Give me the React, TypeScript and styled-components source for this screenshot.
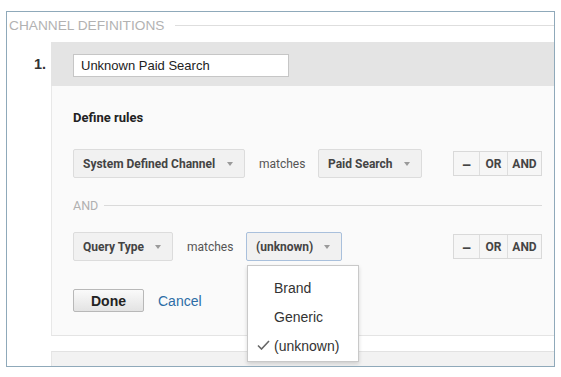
import styled, { createGlobalStyle } from "styled-components";

const GlobalStyle = createGlobalStyle`
  html, body {
    margin: 0;
    padding: 0;
    background: #ffffff;
  }
  body {
    font-family: "Liberation Sans", Arial, sans-serif;
  }
`;

const Frame = styled.div`
  margin: 11px 0 0 6px;
  width: 549px;
  height: 356px;
  box-sizing: border-box;
  border: 1px solid #8fa9ba;
  overflow: hidden;
  background: #ffffff;
`;

const Header = styled.div`
  display: flex;
  align-items: center;
  gap: 11px;
  height: 16px;
  margin: 5px 0 9px 2px;
`;

const HeaderTitle = styled.span`
  font-family: "Liberation Sans", Arial, sans-serif;
  font-size: 13.7px;
  color: #b2b2b2;
  white-space: nowrap;
`;

const HeaderLine = styled.div`
  flex: 1;
  height: 1px;
  background: #dedede;
`;

const Definition = styled.div<{ $gap?: number }>`
  display: grid;
  grid-template-columns: 44px 1fr;
  margin-top: ${(p) => p.$gap ?? 0}px;
`;

const Number = styled.div`
  height: 44px;
  display: flex;
  align-items: center;
  justify-content: flex-end;
  padding-right: 5px;
  font-family: "Liberation Sans", Arial, sans-serif;
  font-weight: 700;
  font-size: 14.5px;
  color: #333333;
`;

const NameBar = styled.div<{ $muted?: boolean }>`
  height: 44px;
  box-sizing: border-box;
  padding: 12px 22px 0;
  background: ${(p) => (p.$muted ? "#f2f2f2" : "#e4e4e4")};
  border-top: ${(p) => (p.$muted ? "1px solid #e2e2e2" : "none")};
  border-left: ${(p) => (p.$muted ? "1px solid #e6e6e6" : "none")};
`;

const NameInput = styled.div`
  width: 216px;
  height: 23px;
  box-sizing: border-box;
  border: 1px solid #c6c6c6;
  background: #ffffff;
  padding: 0 7px;
  display: flex;
  align-items: center;
  font-family: "Liberation Sans", Arial, sans-serif;
  font-size: 13px;
  color: #222222;
`;

const Spacer = styled.div``;

const RulesPanel = styled.div`
  background: #fafafa;
  border-left: 1px solid #e8e8e8;
  border-bottom: 1px solid #e4e4e4;
  padding: 24px 12px 23px 21px;
  display: flex;
  flex-direction: column;
`;

const PanelTitle = styled.div`
  font-family: Roboto, "Liberation Sans", sans-serif;
  font-weight: 700;
  font-size: 13px;
  line-height: 16px;
  color: #222222;
`;

const RuleRow = styled.div<{ $top: number }>`
  display: flex;
  align-items: center;
  height: 29px;
  margin-top: ${(p) => p.$top}px;
`;

const SelectWrap = styled.div`
  position: relative;
`;

const Select = styled.div<{ $w: number; $focused?: boolean }>`
  width: ${(p) => p.$w}px;
  height: 29px;
  box-sizing: border-box;
  padding: 0 11px 0 9px;
  display: flex;
  align-items: center;
  justify-content: space-between;
  background: #f1f1f1;
  border: 1px solid ${(p) => (p.$focused ? "#a9c0dc" : "#dcdcdc")};
  border-radius: 2px;
  font-family: Roboto, "Liberation Sans", sans-serif;
  font-weight: 700;
  font-size: 12px;
  color: #444444;
  white-space: nowrap;
`;

const Caret = styled.span`
  width: 0;
  height: 0;
  border-left: 3.5px solid transparent;
  border-right: 3.5px solid transparent;
  border-top: 4px solid #9a9a9a;
  margin-top: 1px;
`;

const Matches = styled.span`
  width: 44px;
  margin: 0 15px 0 14px;
  font-family: Roboto, "Liberation Sans", sans-serif;
  font-size: 12px;
  color: #555555;
  white-space: nowrap;
`;

const ButtonGroup = styled.div`
  margin-left: auto;
  display: flex;
  height: 25px;
  box-sizing: border-box;
  border: 1px solid #d9d9d9;
  background: #f6f6f6;
`;

const GroupButton = styled.div<{ $w: number; $big?: boolean }>`
  width: ${(p) => p.$w}px;
  display: flex;
  align-items: center;
  justify-content: center;
  padding-top: ${(p) => (p.$big ? 2 : 0)}px;
  font-family: Roboto, "Liberation Sans", sans-serif;
  font-weight: 700;
  font-size: ${(p) => (p.$big ? 15 : 12)}px;
  color: #444444;
  & + & {
    border-left: 1px solid #dedede;
  }
`;

const Divider = styled.div`
  display: flex;
  align-items: center;
  gap: 6px;
  height: 16px;
  margin-top: 19px;
`;

const DividerLabel = styled.span`
  font-family: Roboto, "Liberation Sans", sans-serif;
  font-size: 12.5px;
  color: #b0b0b0;
`;

const DividerLine = styled.div`
  flex: 1;
  height: 1px;
  background: #dadada;
`;

const Actions = styled.div`
  display: flex;
  align-items: center;
  gap: 14px;
  margin-top: 28px;
`;

const DoneButton = styled.div`
  width: 71px;
  height: 23px;
  box-sizing: border-box;
  display: flex;
  align-items: center;
  justify-content: center;
  border: 1px solid #b8b8b8;
  border-radius: 2px;
  background: linear-gradient(#fafafa, #e3e3e3);
  font-family: "Liberation Sans", Arial, sans-serif;
  font-weight: 700;
  font-size: 14px;
  color: #222222;
`;

const CancelLink = styled.span`
  font-family: "Liberation Sans", Arial, sans-serif;
  font-size: 14px;
  color: #2d6da6;
`;

const Menu = styled.div`
  position: absolute;
  top: calc(100% + 4px);
  left: 1px;
  z-index: 10;
  width: 112px;
  box-sizing: border-box;
  padding: 7px 0 1px;
  background: #ffffff;
  border: 1px solid #c9c9c9;
  box-shadow: 0 2px 4px rgba(0, 0, 0, 0.15);
`;

const MenuItem = styled.div`
  position: relative;
  height: 29px;
  display: flex;
  align-items: center;
  padding-left: 26px;
  font-family: "Liberation Sans", Arial, sans-serif;
  font-size: 14px;
  color: #333333;
`;

const Check = styled.svg`
  position: absolute;
  left: 9px;
  top: 9px;
`;

type Rule = {
  field: string;
  fieldW: number;
  value: string;
  valueW: number;
  open?: boolean;
};

const rules: Rule[] = [
  { field: "System Defined Channel", fieldW: 172, value: "Paid Search", valueW: 104 },
  { field: "Query Type", fieldW: 100, value: "(unknown)", valueW: 96, open: true },
];

const options = ["Brand", "Generic", "(unknown)"];

function RuleLine({ rule, top }: { rule: Rule; top: number }) {
  return (
    <RuleRow $top={top}>
      <Select $w={rule.fieldW}>
        {rule.field}
        <Caret />
      </Select>
      <Matches>matches</Matches>
      <SelectWrap>
        <Select $w={rule.valueW} $focused={rule.open}>
          {rule.value}
          <Caret />
        </Select>
        {rule.open && (
          <Menu>
            {options.map((o) => (
              <MenuItem key={o}>
                {o === rule.value && (
                  <Check width="13" height="10" viewBox="0 0 13 10">
                    <path d="M1 5.5 L4.5 9 L12 1" fill="none" stroke="#666" strokeWidth="1.6" />
                  </Check>
                )}
                {o}
              </MenuItem>
            ))}
          </Menu>
        )}
      </SelectWrap>
      <ButtonGroup>
        <GroupButton $w={25} $big>–</GroupButton>
        <GroupButton $w={27}>OR</GroupButton>
        <GroupButton $w={33}>AND</GroupButton>
      </ButtonGroup>
    </RuleRow>
  );
}

export default function App() {
  return (
    <>
      <GlobalStyle />
      <Frame>
        <Header>
          <HeaderTitle>CHANNEL DEFINITIONS</HeaderTitle>
          <HeaderLine />
        </Header>
        <Definition>
          <Number>1.</Number>
          <NameBar>
            <NameInput>Unknown Paid Search</NameInput>
          </NameBar>
          <Spacer />
          <RulesPanel>
            <PanelTitle>Define rules</PanelTitle>
            <RuleLine rule={rules[0]} top={23} />
            <Divider>
              <DividerLabel>AND</DividerLabel>
              <DividerLine />
            </Divider>
            <RuleLine rule={rules[1]} top={19} />
            <Actions>
              <DoneButton>Done</DoneButton>
              <CancelLink>Cancel</CancelLink>
            </Actions>
          </RulesPanel>
        </Definition>
        <Definition $gap={15}>
          <Number>2.</Number>
          <NameBar $muted />
        </Definition>
      </Frame>
    </>
  );
}
